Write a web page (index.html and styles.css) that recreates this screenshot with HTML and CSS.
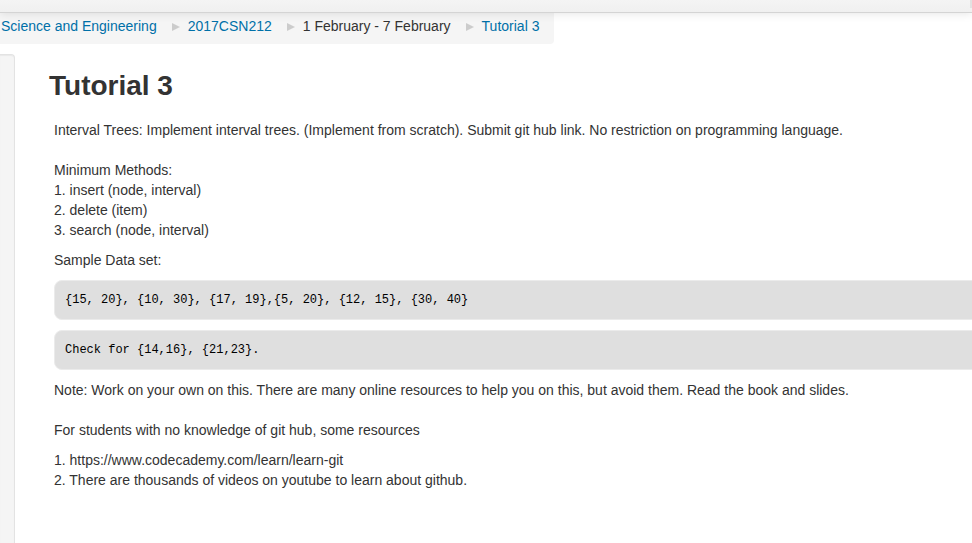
FILE: index.html
```html
<!DOCTYPE html>
<html lang="en">
<head>
<meta charset="utf-8">
<title>Tutorial 3</title>
<link rel="stylesheet" href="styles.css">
</head>
<body>
<header class="navbar"><span class="navbar-divider"></span></header>
<nav class="breadcrumb" aria-label="Breadcrumb">
  <a href="#">Science and Engineering</a>
  <svg class="divider" viewBox="0 0 8 8" aria-hidden="true"><path d="M0 0 8 4 0 8Z"/></svg>
  <a href="#">2017CSN212</a>
  <svg class="divider" viewBox="0 0 8 8" aria-hidden="true"><path d="M0 0 8 4 0 8Z"/></svg>
  <span>1 February - 7 February</span>
  <svg class="divider" viewBox="0 0 8 8" aria-hidden="true"><path d="M0 0 8 4 0 8Z"/></svg>
  <a href="#">Tutorial 3</a>
</nav>
<div class="page">
  <aside class="sidebar"></aside>
  <main class="content">
    <h1>Tutorial 3</h1>
    <div class="intro">
      <p>Interval Trees: Implement interval trees. (Implement from scratch). Submit git hub link. No restriction on programming language.<br><br>Minimum Methods:<br>1. insert (node, interval)<br>2. delete (item)<br>3. search (node, interval)</p>
      <p>Sample Data set:</p>
      <pre>{15, 20}, {10, 30}, {17, 19},{5, 20}, {12, 15}, {30, 40}</pre>
      <pre>Check for {14,16}, {21,23}.</pre>
      <p>Note: Work on your own on this. There are many online resources to help you on this, but avoid them. Read the book and slides.<br><br>For students with no knowledge of git hub, some resources</p>
      <p>1. https://www.codecademy.com/learn/learn-git<br>2. There are thousands of videos on youtube to learn about github.</p>
    </div>
  </main>
</div>
</body>
</html>
```
FILE: styles.css
```css
* {
  box-sizing: border-box;
}

body {
  display: flex;
  flex-direction: column;
  min-height: 100vh;
  margin: 0;
  overflow-x: hidden;
  background: #fff;
  color: #333;
  font: 14px/20px "Liberation Sans", Arial, sans-serif;
}

a {
  color: #0070a8;
  text-decoration: none;
}

.navbar {
  position: relative;
  z-index: 1;
  display: flex;
  justify-content: flex-end;
  height: 13px;
  border-bottom: 1px solid #d4d4d4;
  background: linear-gradient(#f4f4f4, #f0f0f0);
  box-shadow: 0 1px 10px rgba(0, 0, 0, 0.1);
}

.navbar-divider {
  width: 2px;
  height: 8px;
  background: #e2e2e2;
}

.breadcrumb {
  display: flex;
  align-self: flex-start;
  padding: 3px 15px 8px 1px;
  border-radius: 0 0 4px 0;
  background: #f5f5f5;
  white-space: nowrap;
}

.divider {
  width: 8px;
  height: 8px;
  margin: 7px 8px 0 15px;
  fill: #ccc;
}

.page {
  display: flex;
  flex: 1;
  padding-top: 10px;
}

.sidebar {
  flex: none;
  width: 15px;
  border: solid #e3e3e3;
  border-width: 1px 1px 0 0;
  border-radius: 0 4px 0 0;
  background: #f5f5f5;
  box-shadow: inset 0 1px 1px rgba(0, 0, 0, 0.05);
}

.content {
  flex: 1;
  min-width: 0;
  padding: 12px 0 0 34px;
}

h1 {
  margin: 0 0 14px;
  font-size: 28px;
  line-height: 40px;
}

.intro {
  padding-left: 5px;
}

p {
  margin: 0 0 10px;
}

pre {
  margin: 0 -8px 10px 0;
  padding: 9px 10px;
  border: 1px solid #ebebeb;
  border-radius: 8px;
  background: #dfdfdf;
  color: #000;
  font: 12px/20px "Liberation Mono", monospace;
}
```
